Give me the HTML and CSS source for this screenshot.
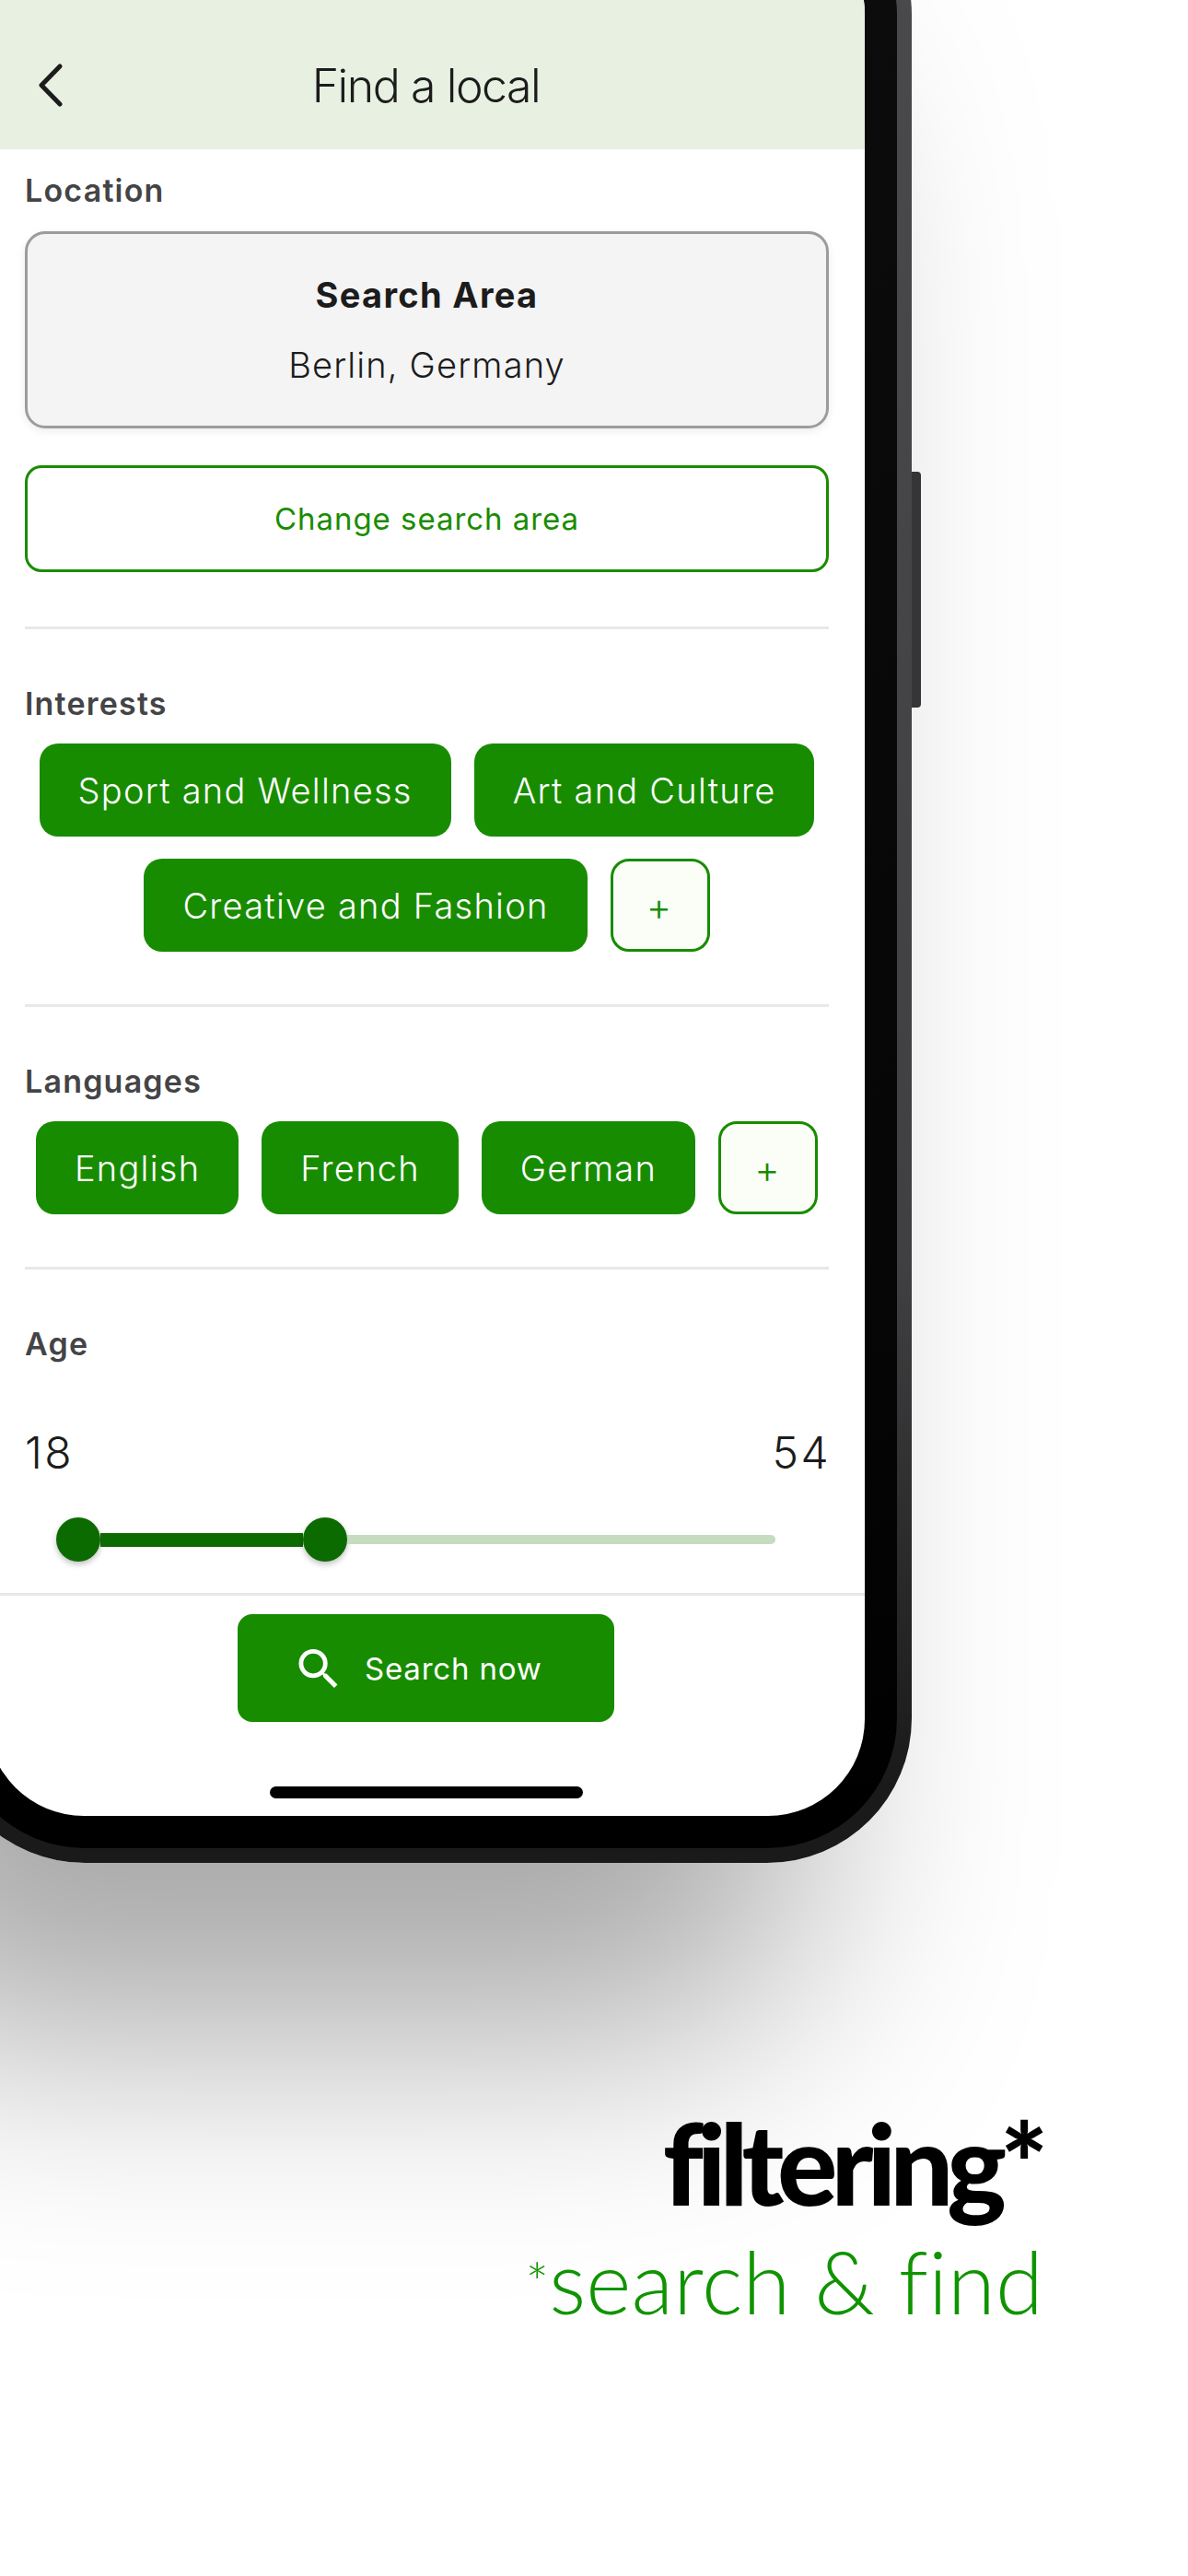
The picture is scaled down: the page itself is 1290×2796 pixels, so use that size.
FILE: index.html
```html
<!DOCTYPE html>
<html lang="en">
<head>
  <meta charset="UTF-8" />
  <title>Filtering - search and find</title>
  <link rel="stylesheet" href="styles.css">
</head>
<body>

<div class="phone">
  <div class="bezel">
    <div class="side-btn"></div>
    <div class="screen">
      <header class="topbar">
        <svg class="back" viewBox="0 0 26 47" width="26" height="47">
          <path d="M23 3 L3 23.5 L23 44" fill="none" stroke="#1c1c1c" stroke-width="5" stroke-linecap="round" stroke-linejoin="round"/>
        </svg>
        <h1>Find a local</h1>
      </header>

      <div class="content">
        <h2 class="label first">Location</h2>
        <div class="area-box">
          <strong>Search Area</strong>
          <span>Berlin, Germany</span>
        </div>
        <button class="change-btn">Change search area</button>
        <hr class="divider">

        <h2 class="label">Interests</h2>
        <div class="chips">
          <span class="chip">Sport and Wellness</span>
          <span class="chip">Art and Culture</span>
          <span class="chip">Creative and Fashion</span>
          <span class="chip add">+</span>
        </div>
        <hr class="divider">

        <h2 class="label">Languages</h2>
        <div class="chips">
          <span class="chip">English</span>
          <span class="chip">French</span>
          <span class="chip">German</span>
          <span class="chip add">+</span>
        </div>
        <hr class="divider">

        <h2 class="label">Age</h2>
        <div class="age-values">
          <span>18</span>
          <span>54</span>
        </div>
        <div class="slider">
          <span class="thumb"></span>
          <span class="fill"></span>
          <span class="thumb"></span>
          <span class="rest"></span>
        </div>
      </div>

      <footer class="bottom">
        <button class="search-btn">
          <svg viewBox="3 3 17.5 17.5" width="43" height="42">
            <path fill="#fff" d="M15.5 14h-.79l-.28-.27A6.471 6.471 0 0 0 16 9.5 6.5 6.5 0 1 0 9.5 16c1.61 0 3.09-.59 4.23-1.57l.27.28v.79l5 4.99L20.49 19l-4.99-5zm-6 0C7.01 14 5 11.99 5 9.5S7.01 5 9.5 5 14 7.01 14 9.5 11.99 14 9.5 14z"/>
          </svg>
          Search now
        </button>
        <div class="home-bar"></div>
      </footer>
    </div>
  </div>
</div>

<div class="brand">
  <div class="logo">filtering*</div>
  <div class="tagline"><span class="star">*</span>search &amp; find</div>
</div>

</body>
</html>
```

FILE: styles.css
```css
* {
  box-sizing: border-box;
}

body {
  margin: 0;
  width: 1290px;
  height: 2796px;
  overflow: hidden;
  background: #fff;
  font-family: 'Inter', 'Liberation Sans', sans-serif;
}

/* phone mockup, bleeds off the top and left */
.phone {
  width: 1055px;
  margin: -141px 0 0 -65px;
  padding: 16px;
  border-radius: 157px;
  background: linear-gradient(to bottom, #4a4a4c 0%, #404042 70%, #1a1a1a 96%);
  box-shadow: -120px 190px 300px rgba(0,0,0,0.34);
}

.bezel {
  position: relative;
  padding: 35px;
  border-radius: 141px;
  background: linear-gradient(to bottom, #0c0c0c 0%, #060606 70%, #000 100%);
}

.side-btn {
  position: absolute;
  right: -26px;
  top: 637px;
  width: 10px;
  height: 256px;
  border-radius: 0 4px 4px 0;
  background: #353537;
}

.screen {
  border-radius: 105px;
  overflow: hidden;
  background: #fff;
}

.topbar {
  display: flex;
  align-items: center;
  justify-content: center;
  position: relative;
  height: 252px;
  padding-top: 118px;
  background: #e8f0e2;
}

.back {
  position: absolute;
  left: 56px;
  top: 159px;
}

.topbar h1 {
  margin: 0 0 4px;
  font-size: 50px;
  font-weight: 300;
  letter-spacing: -1.45px;
  color: #1c1c1c;
}

.content {
  padding: 0 39px 0 41px;
}

.label {
  margin: 59px 0 21px;
  height: 44px;
  line-height: 44px;
  font-size: 34px;
  font-weight: 600;
  letter-spacing: 1.2px;
  color: #444446;
}

.label.first {
  margin-top: 23px;
  margin-bottom: 22px;
}

.area-box {
  display: flex;
  flex-direction: column;
  align-items: center;
  height: 214px;
  padding-top: 42px;
  border: 3px solid #9c9c9c;
  border-radius: 22px;
  background: #f4f4f4;
  box-shadow: 0 3px 10px rgba(0,0,0,0.08);
  color: #1c1c1c;
  font-size: 38px;
}

.area-box strong {
  font-weight: 700;
  line-height: 48px;
  letter-spacing: 1.3px;
}

.area-box span {
  margin-top: 28px;
  line-height: 48px;
  font-weight: 300;
  letter-spacing: 1.15px;
}

.change-btn {
  display: block;
  width: 100%;
  height: 116px;
  margin-top: 40px;
  border: 3px solid #1a8c00;
  border-radius: 18px;
  background: #fff;
  color: #1a8c00;
  font-family: inherit;
  font-size: 33px;
  letter-spacing: 0.95px;
}

.divider {
  height: 3px;
  margin: 59px 0 0;
  border: none;
  background: #e8e8e8;
}

.chips {
  display: flex;
  flex-wrap: wrap;
  justify-content: center;
  gap: 24px 25px;
  margin-bottom: 57px;
}

.chip {
  display: flex;
  align-items: center;
  height: 101px;
  padding: 0 42px;
  border-radius: 20px;
  background: #188c00;
  color: #fff;
  font-size: 38px;
  font-weight: 300;
  letter-spacing: 1.25px;
}

.chip.add {
  justify-content: center;
  width: 108px;
  padding: 1px 2px 0 0;
  border: 3px solid #188c00;
  background: #fbfdf7;
  color: #188c00;
  font-size: 42px;
  letter-spacing: 0;
}

.chips + .divider {
  margin-top: 0;
}

.age-values {
  display: flex;
  justify-content: space-between;
  height: 56px;
  margin-top: 68px;
  margin-right: -2px;
  line-height: 56px;
  font-size: 48px;
  font-weight: 300;
  letter-spacing: 2.4px;
  color: #1c1c1c;
}

.slider {
  display: flex;
  align-items: center;
  margin-top: 42px;
  padding-left: 34px;
}

.thumb {
  flex: none;
  width: 48px;
  height: 48px;
  border-radius: 50%;
  background: #0c6b00;
  box-shadow: 0 3px 6px rgba(0,0,0,0.25);
}

.fill {
  flex: none;
  width: 220px;
  height: 15px;
  background: #0c6b00;
}

.rest {
  flex: none;
  width: 465px;
  height: 10px;
  border-radius: 0 5px 5px 0;
  background: #c5dcc0;
}

.bottom {
  display: flex;
  flex-direction: column;
  align-items: center;
  height: 242px;
  margin-top: 34px;
  padding-top: 20px;
  border-top: 3px solid #e8e8e8;
}

.search-btn {
  display: flex;
  align-items: center;
  gap: 29px;
  width: 409px;
  height: 117px;
  padding: 0 0 0 66px;
  border: none;
  border-radius: 16px;
  background: #188c00;
  color: #fff;
  font-family: inherit;
  font-size: 33px;
  letter-spacing: 0.8px;
}

.home-bar {
  width: 340px;
  height: 13px;
  margin-top: 70px;
  border-radius: 7px;
  background: #000;
}

.brand {
  display: flex;
  flex-direction: column;
  align-items: flex-end;
  margin-top: 260px;
  padding-right: 159px;
}

.logo {
  height: 130px;
  line-height: 130px;
  font-family: 'Lato', sans-serif;
  font-size: 122px;
  font-weight: 900;
  letter-spacing: -7px;
  color: #000;
}

.tagline {
  margin-top: 9px;
  margin-right: -2px;
  line-height: 110px;
  font-family: 'Lato', sans-serif;
  font-size: 94px;
  font-weight: 300;
  letter-spacing: 0.2px;
  color: #109300;
}

.tagline .star {
  font-size: 60px;
  vertical-align: 12px;
}
```
